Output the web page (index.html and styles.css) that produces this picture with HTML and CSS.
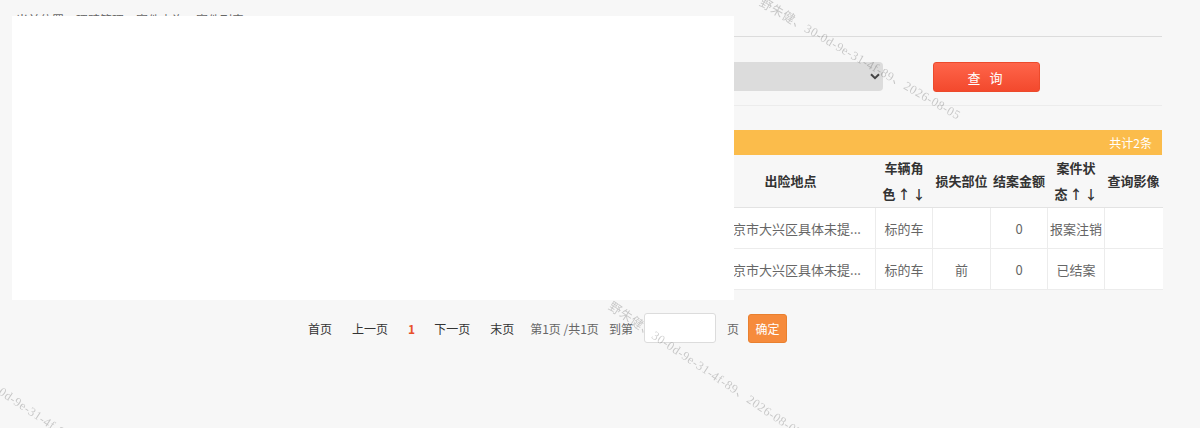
FILE: index.html
```html
<!DOCTYPE html>
<html>
<head>
    <title>案件查询</title>
    <meta charset="utf-8">
    <link rel="stylesheet" href="styles.css">
</head>
<body>
    <div class="page">
        <div class="crumb">当前位置：理赔管理 &gt; 案件查询 &gt; 案件列表</div>

        <form class="search-row">
            <label class="field">报案号：<input type="text"></label>
            <label class="field">车牌号：<input type="text"></label>
            <label class="field">案件状态：
                <div class="select-box">
                    <span>全部</span>
                    <svg width="10" height="7" viewBox="0 0 10 7"><path d="M1 1.2 5 5.2 9 1.2" fill="none" stroke="#444" stroke-width="2"/></svg>
                </div>
            </label>
            <button type="button" class="btn-query">查 询</button>
        </form>

        <div class="result-bar"><span>共计2条</span></div>

        <table class="grid">
            <colgroup>
                <col style="width: 50px"><col style="width: 170px"><col style="width: 170px">
                <col style="width: 95px"><col style="width: 100px"><col style="width: 108px">
                <col style="width: 170px"><col style="width: 57px"><col style="width: 58px">
                <col style="width: 57px"><col style="width: 57px"><col style="width: 58px">
            </colgroup>
            <thead>
                <tr>
                    <th>序号</th>
                    <th>报案号</th>
                    <th>保单号</th>
                    <th>车牌号</th>
                    <th>被保险人</th>
                    <th>出险时间</th>
                    <th>出险地点</th>
                    <th>车辆角<span class="nw">色<a class="sort">↑</a><a class="sort">↓</a></span></th>
                    <th>损失部位</th>
                    <th>结案金额</th>
                    <th>案件状<span class="nw">态<a class="sort">↑</a><a class="sort">↓</a></span></th>
                    <th>查询影像</th>
                </tr>
            </thead>
            <tbody>
                <tr>
                    <td>1</td>
                    <td>RDAA2026110000000377</td>
                    <td>PDAA2025110000000261</td>
                    <td>京A·D1234</td>
                    <td>张某某</td>
                    <td>2026-07-28</td>
                    <td>北京市大兴区具体未提...</td>
                    <td>标的车</td>
                    <td></td>
                    <td>0</td>
                    <td>报案注销</td>
                    <td></td>
                </tr>
                <tr>
                    <td>2</td>
                    <td>RDAA2026110000000352</td>
                    <td>PDAA2025110000000261</td>
                    <td>京A·D1234</td>
                    <td>张某某</td>
                    <td>2026-07-15</td>
                    <td>北京市大兴区具体未提...</td>
                    <td>标的车</td>
                    <td>前</td>
                    <td>0</td>
                    <td>已结案</td>
                    <td></td>
                </tr>
            </tbody>
        </table>

        <div class="pager">
            <a class="pg">首页</a>
            <a class="pg">上一页</a>
            <a class="pg current">1</a>
            <a class="pg">下一页</a>
            <a class="pg">末页</a>
            <span class="info page-count">第1页 /共1页</span>
            <span class="info goto-label">到第</span>
            <input type="text" class="goto">
            <span class="info">页</span>
            <button type="button" class="btn-go">确定</button>
        </div>
    </div>

    <!-- cover panel over the left part of the list -->
    <div class="mask"></div>

    <div class="wm-layer">
        <div class="wm wm1">野朱健、30-0d-9e-31-4f-89、2026-08-05</div>
        <div class="wm wm2">野朱健、30-0d-9e-31-4f-89、2026-08-05</div>
        <div class="wm wm3">野朱健、30-0d-9e-31-4f-89、2026-08-05</div>
    </div>
</body>
</html>
```

FILE: styles.css
```css
body {
    margin: 0;
    background-color: #f7f7f7;
    font-family: "Noto Sans CJK SC", "Noto Sans", sans-serif;
    font-size: 13px;
    color: #333;
}
.page {
    padding: 0 38px 0 12px;
}
.crumb {
    height: 37px;
    padding: 11px 0 0 4px;
    box-sizing: border-box;
    border-bottom: 1px solid #dcdcdc;
    font-size: 12px;
    color: #666;
}
.search-row {
    display: flex;
    justify-content: flex-end;
    align-items: flex-start;
    height: 69px;
    margin: 0;
    padding: 25px 122px 0 0;
    box-sizing: border-box;
    border-bottom: 1px solid #ececec;
}
.field {
    display: flex;
    align-items: center;
    margin-left: 20px;
    height: 29px;
    color: #555;
}
.field input {
    width: 130px;
    height: 27px;
    border: 1px solid #ddd;
    border-radius: 3px;
}
.select-box {
    display: flex;
    align-items: center;
    justify-content: space-between;
    width: 200px;
    height: 29px;
    padding: 0 3px 0 10px;
    box-sizing: border-box;
    background-color: #dcdcdc;
    border-radius: 4px;
    color: #555;
}
.btn-query {
    width: 107px;
    height: 30px;
    margin-left: 50px;
    border: 1px solid #ec4a2c;
    border-radius: 3px;
    background: linear-gradient(#fe654a, #f3492d);
    color: #fff;
    font-family: inherit;
    font-size: 13px;
    letter-spacing: 3px;
}
.result-bar {
    display: flex;
    justify-content: flex-end;
    align-items: center;
    height: 25px;
    margin-top: 24px;
    padding-right: 10px;
    background-color: #fbbc4b;
    color: #fff;
    font-size: 12px;
}
.grid {
    width: 1150px;
    table-layout: fixed;
    border-collapse: collapse;
}
.grid th {
    height: 52px;
    padding: 0 1px;
    line-height: 26px;
    font-weight: bold;
    color: #333;
    background-color: #f7f7f7;
    border-bottom: 1px solid #e3e3e3;
}
.grid th .nw {
    white-space: nowrap;
}
.grid th .sort {
    padding-left: 2px;
}
.grid td {
    height: 40px;
    padding: 0 2px;
    text-align: center;
    color: #666;
    background-color: #fff;
    border: 1px solid #ececec;
    border-top: none;
    white-space: nowrap;
    overflow: hidden;
    text-overflow: ellipsis;
}
.grid td:last-child {
    border-right: none;
}
.pager {
    display: flex;
    align-items: center;
    height: 30px;
    margin-top: 23px;
    padding-left: 286px;
    font-size: 12px;
}
.pg {
    padding: 0 10px;
    color: #333;
}
.pg.current {
    padding-right: 9px;
    color: #e8502a;
    font-weight: bold;
}
.info {
    margin-left: 11px;
    color: #666;
}
.info.page-count {
    margin-left: 6px;
}
.info.goto-label {
    margin-left: 10px;
}
.goto {
    width: 72px;
    height: 30px;
    margin-left: 11px;
    box-sizing: border-box;
    border: 1px solid #dcdcdc;
    border-radius: 3px;
    background: #fff;
}
.btn-go {
    width: 39px;
    height: 29px;
    margin-left: 9px;
    padding: 0;
    border: 1px solid #e9802f;
    border-radius: 3px;
    background-color: #f68b3c;
    color: #fff;
    font-family: inherit;
    font-size: 12px;
}
.mask {
    position: absolute;
    left: 12px;
    top: 16px;
    width: 722px;
    height: 284px;
    background-color: #fff;
}
.wm-layer {
    position: fixed;
    inset: 0;
    overflow: hidden;
    pointer-events: none;
}
.wm {
    position: absolute;
    white-space: nowrap;
    font-family: "Liberation Serif", "Noto Sans CJK SC", serif;
    font-size: 12.5px;
    letter-spacing: 0.5px;
    color: rgba(0, 0, 0, 0.2);
    transform: rotate(34deg);
    transform-origin: 0 0;
}
.wm1 {
    left: 766px;
    top: -8px;
    transform: rotate(30deg);
}
.wm2 {
    left: 616px;
    top: 296px;
}
.wm3 {
    left: -52px;
    top: 342px;
}
```
